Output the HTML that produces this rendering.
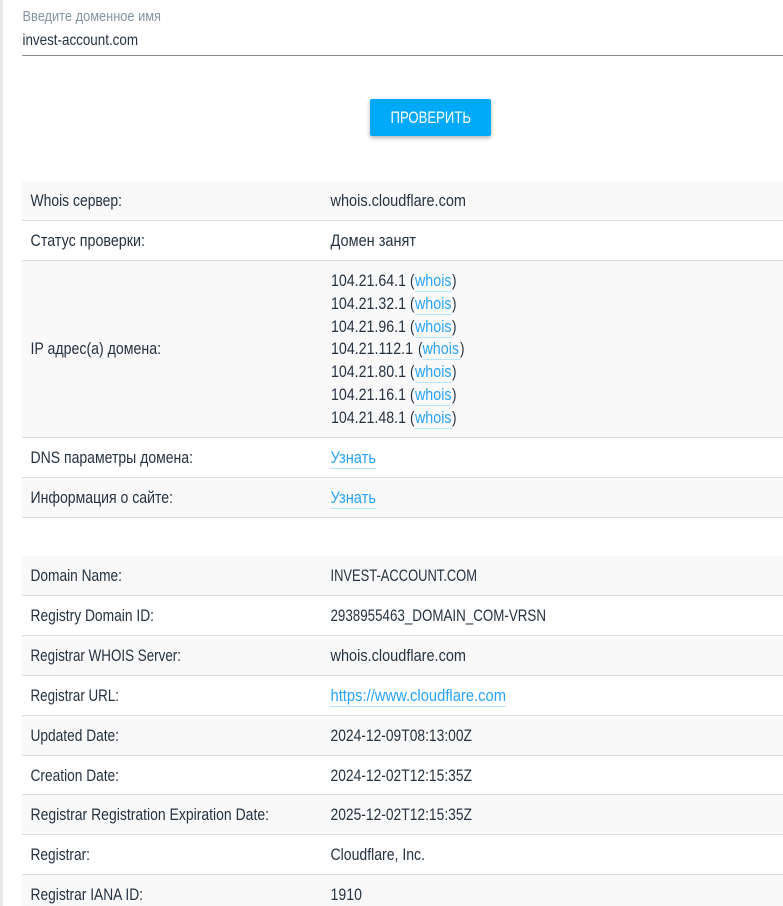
<!DOCTYPE html>
<html><head><meta charset="utf-8">
<style>
html,body{margin:0;padding:0;background:#fff;width:783px;height:906px;overflow:hidden}
svg{display:block}
text{font-family:"Liberation Sans",sans-serif;font-size:16.5px;fill:#273240}
.l{fill:#29a3f6}
</style></head><body>
<svg width="783" height="906" viewBox="0 0 783 906" xmlns="http://www.w3.org/2000/svg">
<defs><filter id="s" x="-20%" y="-30%" width="140%" height="170%"><feDropShadow dx="0" dy="2" stdDeviation="2" flood-color="#000" flood-opacity=".3"/></filter></defs>
<rect x="0" y="0" width="3" height="906" fill="#e8e8e8"/>
<text x="22.5" y="21" textLength="138.5" lengthAdjust="spacingAndGlyphs" style="font-size:14.5px;fill:#8593a3">Введите доменное имя</text>
<text x="22.5" y="45" textLength="115.5" lengthAdjust="spacingAndGlyphs" style="font-size:16px">invest-account.com</text>
<rect x="22" y="55" width="761" height="1" fill="#8a8d8f"/>
<rect x="370" y="99" width="121" height="37" rx="2" fill="#03a9fa" filter="url(#s)"/>
<text x="390.5" y="123" textLength="80.5" lengthAdjust="spacingAndGlyphs" style="fill:#fff;font-size:16.5px">ПРОВЕРИТЬ</text>

<g fill="#f9f9f9">
<rect x="22" y="181" width="761" height="39"/>
<rect x="22" y="261" width="761" height="176"/>
<rect x="22" y="478" width="761" height="39"/>
<rect x="22" y="556" width="761" height="39"/>
<rect x="22" y="636" width="761" height="39"/>
<rect x="22" y="716" width="761" height="39"/>
<rect x="22" y="795" width="761" height="39"/>
<rect x="22" y="875" width="761" height="31"/>
</g>
<g fill="#dedede">
<rect x="22" y="220" width="761" height="1"/>
<rect x="22" y="260" width="761" height="1"/>
<rect x="22" y="437" width="761" height="1"/>
<rect x="22" y="477" width="761" height="1"/>
<rect x="22" y="517" width="761" height="1"/>
<rect x="22" y="595" width="761" height="1"/>
<rect x="22" y="635" width="761" height="1"/>
<rect x="22" y="675" width="761" height="1"/>
<rect x="22" y="715" width="761" height="1"/>
<rect x="22" y="755" width="761" height="1"/>
<rect x="22" y="794" width="761" height="1"/>
<rect x="22" y="834" width="761" height="1"/>
<rect x="22" y="874" width="761" height="1"/>
</g>

<text x="30.5" y="206" textLength="91.5" lengthAdjust="spacingAndGlyphs">Whois сервер:</text>
<text x="330.5" y="206" textLength="135.5" lengthAdjust="spacingAndGlyphs">whois.cloudflare.com</text>
<text x="30.5" y="246" textLength="114.5" lengthAdjust="spacingAndGlyphs">Статус проверки:</text>
<text x="330.5" y="246" textLength="85.5" lengthAdjust="spacingAndGlyphs">Домен занят</text>
<text x="30.5" y="354" textLength="130.5" lengthAdjust="spacingAndGlyphs">IP адрес(а) домена:</text>

<text x="331" y="286" textLength="75" lengthAdjust="spacingAndGlyphs">104.21.64.1</text><text x="410" y="286" textLength="4.5" lengthAdjust="spacingAndGlyphs">(</text><text class="l" x="415" y="286" textLength="36.5" lengthAdjust="spacingAndGlyphs">whois</text><text x="452" y="286" textLength="4.5" lengthAdjust="spacingAndGlyphs">)</text>
<text x="331" y="309" textLength="75" lengthAdjust="spacingAndGlyphs">104.21.32.1</text><text x="410" y="309" textLength="4.5" lengthAdjust="spacingAndGlyphs">(</text><text class="l" x="415" y="309" textLength="36.5" lengthAdjust="spacingAndGlyphs">whois</text><text x="452" y="309" textLength="4.5" lengthAdjust="spacingAndGlyphs">)</text>
<text x="331" y="332" textLength="75" lengthAdjust="spacingAndGlyphs">104.21.96.1</text><text x="410" y="332" textLength="4.5" lengthAdjust="spacingAndGlyphs">(</text><text class="l" x="415" y="332" textLength="36.5" lengthAdjust="spacingAndGlyphs">whois</text><text x="452" y="332" textLength="4.5" lengthAdjust="spacingAndGlyphs">)</text>
<text x="331" y="354" textLength="82" lengthAdjust="spacingAndGlyphs">104.21.112.1</text><text x="418" y="354" textLength="4.5" lengthAdjust="spacingAndGlyphs">(</text><text class="l" x="422.5" y="354" textLength="36.5" lengthAdjust="spacingAndGlyphs">whois</text><text x="460" y="354" textLength="4.5" lengthAdjust="spacingAndGlyphs">)</text>
<text x="331" y="377" textLength="75" lengthAdjust="spacingAndGlyphs">104.21.80.1</text><text x="410" y="377" textLength="4.5" lengthAdjust="spacingAndGlyphs">(</text><text class="l" x="415" y="377" textLength="36.5" lengthAdjust="spacingAndGlyphs">whois</text><text x="452" y="377" textLength="4.5" lengthAdjust="spacingAndGlyphs">)</text>
<text x="331" y="400" textLength="75" lengthAdjust="spacingAndGlyphs">104.21.16.1</text><text x="410" y="400" textLength="4.5" lengthAdjust="spacingAndGlyphs">(</text><text class="l" x="415" y="400" textLength="36.5" lengthAdjust="spacingAndGlyphs">whois</text><text x="452" y="400" textLength="4.5" lengthAdjust="spacingAndGlyphs">)</text>
<text x="331" y="423" textLength="75" lengthAdjust="spacingAndGlyphs">104.21.48.1</text><text x="410" y="423" textLength="4.5" lengthAdjust="spacingAndGlyphs">(</text><text class="l" x="415" y="423" textLength="36.5" lengthAdjust="spacingAndGlyphs">whois</text><text x="452" y="423" textLength="4.5" lengthAdjust="spacingAndGlyphs">)</text>

<g fill="#b3e5fc">
<rect x="415" y="291" width="37" height="1"/>
<rect x="415" y="314" width="37" height="1"/>
<rect x="415" y="337" width="37" height="1"/>
<rect x="423" y="359" width="37" height="1"/>
<rect x="415" y="382" width="37" height="1"/>
<rect x="415" y="405" width="37" height="1"/>
<rect x="415" y="428" width="37" height="1"/>
<rect x="330" y="468" width="46" height="1"/>
<rect x="330" y="508" width="46" height="1"/>
<rect x="330" y="706" width="176" height="1"/>
</g>

<text x="30.5" y="463" textLength="162.5" lengthAdjust="spacingAndGlyphs">DNS параметры домена:</text>
<text class="l" x="330.5" y="463" textLength="45.5" lengthAdjust="spacingAndGlyphs">Узнать</text>
<text x="30.5" y="503" textLength="142.5" lengthAdjust="spacingAndGlyphs">Информация о сайте:</text>
<text class="l" x="330.5" y="503" textLength="45.5" lengthAdjust="spacingAndGlyphs">Узнать</text>

<text x="30.5" y="581" textLength="91.5" lengthAdjust="spacingAndGlyphs">Domain Name:</text>
<text x="330.5" y="581" textLength="146.5" lengthAdjust="spacingAndGlyphs">INVEST-ACCOUNT.COM</text>
<text x="30.5" y="621" textLength="123.5" lengthAdjust="spacingAndGlyphs">Registry Domain ID:</text>
<text x="330.5" y="621" textLength="215.5" lengthAdjust="spacingAndGlyphs">2938955463_DOMAIN_COM-VRSN</text>
<text x="30.5" y="661" textLength="150.5" lengthAdjust="spacingAndGlyphs">Registrar WHOIS Server:</text>
<text x="330.5" y="661" textLength="135.5" lengthAdjust="spacingAndGlyphs">whois.cloudflare.com</text>
<text x="30.5" y="701" textLength="88.5" lengthAdjust="spacingAndGlyphs">Registrar URL:</text>
<text class="l" x="330.5" y="701" textLength="175.5" lengthAdjust="spacingAndGlyphs">https://www.cloudflare.com</text>
<text x="30.5" y="741" textLength="88.5" lengthAdjust="spacingAndGlyphs">Updated Date:</text>
<text x="330.5" y="741" textLength="141.5" lengthAdjust="spacingAndGlyphs">2024-12-09T08:13:00Z</text>
<text x="30.5" y="781" textLength="88.5" lengthAdjust="spacingAndGlyphs">Creation Date:</text>
<text x="330.5" y="781" textLength="141.5" lengthAdjust="spacingAndGlyphs">2024-12-02T12:15:35Z</text>
<text x="30.5" y="820" textLength="238.5" lengthAdjust="spacingAndGlyphs">Registrar Registration Expiration Date:</text>
<text x="330.5" y="820" textLength="141.5" lengthAdjust="spacingAndGlyphs">2025-12-02T12:15:35Z</text>
<text x="30.5" y="860" textLength="59.5" lengthAdjust="spacingAndGlyphs">Registrar:</text>
<text x="330.5" y="860" textLength="94.5" lengthAdjust="spacingAndGlyphs">Cloudflare, Inc.</text>
<text x="30.5" y="900" textLength="112.5" lengthAdjust="spacingAndGlyphs">Registrar IANA ID:</text>
<text x="330.5" y="900" textLength="31.5" lengthAdjust="spacingAndGlyphs">1910</text>
</svg>
</body></html>
